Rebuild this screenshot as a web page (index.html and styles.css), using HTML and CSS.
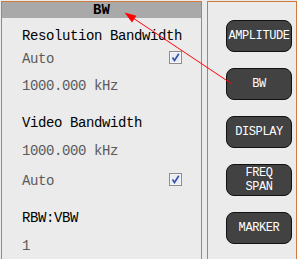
FILE: index.html
```html
<!DOCTYPE html>
<html>
<head>
<meta charset="utf-8">
<link rel="stylesheet" href="styles.css">
</head>
<body>
<div class="app">
  <section class="panel settings">
    <div class="header">BW</div>
    <div class="group first">
      <div class="row title short">Resolution Bandwidth</div>
      <div class="row value short2">Auto
        <span class="check"><svg width="13" height="13" viewBox="0 0 13 13"><rect x="0.5" y="0.5" width="12" height="12" fill="#dcdcdc" stroke="#8c8c8c"/><rect x="1.5" y="1.5" width="10" height="10" fill="#e8ecf4" stroke="#f6f6f6"/><path d="M3.5 6.5 L5.5 9.5 L9.8 2.8" fill="none" stroke="#3550a8" stroke-width="1.6"/></svg></span>
      </div>
      <div class="row value">1000.000 kHz</div>
    </div>
    <div class="group">
      <div class="row title">Video Bandwidth</div>
      <div class="row value tall">1000.000 kHz</div>
      <div class="row value">Auto
        <span class="check"><svg width="13" height="13" viewBox="0 0 13 13"><rect x="0.5" y="0.5" width="12" height="12" fill="#dcdcdc" stroke="#8c8c8c"/><rect x="1.5" y="1.5" width="10" height="10" fill="#e8ecf4" stroke="#f6f6f6"/><path d="M3.5 6.5 L5.5 9.5 L9.8 2.8" fill="none" stroke="#3550a8" stroke-width="1.6"/></svg></span>
      </div>
    </div>
    <div class="group">
      <div class="row title">RBW:VBW</div>
      <div class="row value">1</div>
    </div>
  </section>
  <section class="panel menu">
    <button class="key">AMPLITUDE</button>
    <button class="key">BW</button>
    <button class="key">DISPLAY</button>
    <button class="key">FREQ<br>SPAN</button>
    <button class="key">MARKER</button>
  </section>
  <svg class="annot" width="297" height="259" viewBox="0 0 297 259">
    <line x1="232" y1="84" x2="130" y2="16" stroke="#ff0000" stroke-width="1"/>
    <polygon points="124.5,12.5 132,22.4 136.4,15.8" fill="#ff0000"/>
  </svg>
</div>
</body>
</html>
```
FILE: styles.css
```css
html, body {
  margin: 0;
  padding: 0;
  background: #ebebeb;
  overflow: hidden;
  width: 297px;
  height: 259px;
}
.app {
  position: relative;
  display: flex;
  gap: 5px;
  padding: 1px 0 0 1px;
  height: 258px;
  overflow: hidden;
  font-family: "Liberation Mono", "DejaVu Sans Mono", monospace;
}
.panel {
  border: 1px solid #d0793a;
  border-bottom: none;
  background: #ebebeb;
  box-sizing: border-box;
  height: 258px;
  overflow: hidden;
}
.settings {
  width: 201px;
  flex: none;
}
.header {
  height: 16px;
  background: #a9a9a9;
  text-align: center;
  font-weight: bold;
  font-size: 14px;
  line-height: 16px;
  color: #000;
  margin-bottom: 10px;
}
.group {
  display: flex;
  flex-direction: column;
  margin-bottom: 9px;
}
.row {
  height: 28px;
  line-height: 16px;
  padding-left: 20px;
  padding-right: 19px;
  font-size: 14px;
  letter-spacing: -0.4px;
  white-space: nowrap;
  display: flex;
  justify-content: space-between;
  align-items: flex-start;
  box-sizing: border-box;
}
.row.short { height: 23px; }
.row.short2 { height: 27px; }
.row.tall { height: 30px; }
.title { color: #000; }
.value { color: #5a5a5a; }
.check {
  width: 13px;
  height: 13px;
  display: block;
}
.check svg { display: block; }
.menu {
  flex: 1;
  width: 100px;
  display: flex;
  flex-direction: column;
  gap: 16px;
  padding: 18px 0 0 18px;
}
.key {
  width: 66px;
  height: 32px;
  flex: none;
  border: 1px solid #111;
  border-radius: 8px;
  background: #424242;
  color: #fff;
  font-family: "Liberation Mono", "DejaVu Sans Mono", monospace;
  font-size: 12px;
  letter-spacing: -0.4px;
  line-height: 14px;
  padding: 0;
  text-align: center;
}
.annot {
  position: absolute;
  left: 0;
  top: 0;
  pointer-events: none;
}
```
